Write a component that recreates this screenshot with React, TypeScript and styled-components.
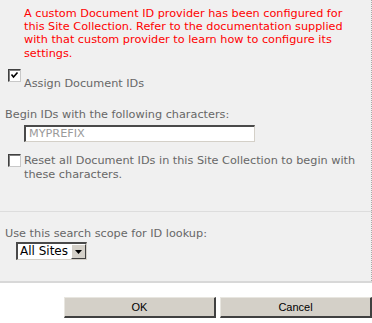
import React from 'react'
import styled, { createGlobalStyle } from 'styled-components'

const GlobalStyle = createGlobalStyle`
  html, body {
    margin: 0;
    padding: 0;
    background: #ffffff;
  }

  body {
    font-family: 'DejaVu Sans', Verdana, sans-serif;
    font-size: 11.25px;
  }
`

const Page = styled.div`
  width: 372px;
  height: 323px;
  display: flex;
  flex-direction: column;
  overflow: hidden;
`

const Panel = styled.div`
  background: #f0f0f0;
  border-right: 1px dotted #a8a8a8;
  box-sizing: border-box;
`

const Section = styled.section<{ $height: number }>`
  height: ${(p) => p.$height}px;
  box-sizing: border-box;
  padding: 7px 0 0 0;
`

const Divider = styled.div<{ $size?: number; $color?: string }>`
  height: ${(p) => p.$size ?? 1}px;
  background: ${(p) => p.$color ?? '#dddddd'};
  margin-right: -1px;
`

const Notice = styled.p`
  margin: 0 0 0 24px;
  padding-right: 12px;
  color: #ff0000;
  line-height: 13.2px;
`

const CheckRow = styled.div<{ $top: number; $labelTop: number }>`
  display: flex;
  align-items: flex-start;
  gap: 3px;
  margin: ${(p) => p.$top}px 0 0 8px;

  & > label {
    padding-top: ${(p) => p.$labelTop}px;
  }
`

const Box = styled.span`
  flex: none;
  width: 13px;
  height: 13px;
  box-sizing: border-box;
  background: #ffffff;
  border-top: 1px solid #404040;
  border-left: 1px solid #404040;
  border-right: 1px solid #c8c8c8;
  border-bottom: 1px solid #c8c8c8;
  box-shadow: inset 1px 1px 0 #808080;
  display: flex;
  align-items: center;
  justify-content: center;
`

const Label = styled.label`
  color: #676767;
  line-height: 13.6px;
`

const FieldLabel = styled.div<{ $top: number }>`
  margin: ${(p) => p.$top}px 0 0 5px;
  color: #676767;
  line-height: 13px;
`

const TextInput = styled.div`
  margin: 4px 0 0 24px;
  width: 231px;
  height: 17px;
  box-sizing: border-box;
  background: #ffffff;
  border-top: 2px solid #4a4a4a;
  border-left: 2px solid #4a4a4a;
  border-right: 1px solid #d4d0c8;
  border-bottom: 1px solid #d4d0c8;
  color: #9a9a9a;
  padding: 1px 0 0 3px;
  line-height: 12px;
`

const Select = styled.div`
  margin: 2px 0 0 16px;
  width: 71px;
  height: 18px;
  box-sizing: border-box;
  display: flex;
  align-items: stretch;
  background: #ffffff;
  border-top: 2px solid #4a4a4a;
  border-left: 2px solid #4a4a4a;
  border-right: 1px solid #d4d0c8;
  border-bottom: 1px solid #d4d0c8;
`

const SelectValue = styled.span`
  flex: 1;
  color: #000000;
  font-size: 12px;
  line-height: 15px;
  padding-left: 2px;
`

const SelectArrow = styled.span`
  flex: none;
  width: 15px;
  box-sizing: border-box;
  background: #d4d0c8;
  border-top: 1px solid #ffffff;
  border-left: 1px solid #ffffff;
  border-right: 1px solid #404040;
  border-bottom: 1px solid #404040;
  display: flex;
  align-items: center;
  justify-content: center;
`

const Footer = styled.footer`
  flex: 1;
  background: #ffffff;
  display: flex;
  justify-content: flex-end;
  align-items: flex-start;
  gap: 4px;
  padding-top: 14px;
`

const Button = styled.button`
  width: 152px;
  height: 21px;
  margin: 0;
  padding: 0;
  box-sizing: border-box;
  background: #d4d0c8;
  border-top: 1px solid #e8e6e0;
  border-left: 1px solid #e8e6e0;
  border-right: 2px solid #404040;
  border-bottom: 2px solid #404040;
  font-family: 'Liberation Sans', Arial, sans-serif;
  font-size: 11px;
  color: #000000;
`

const Check = () => (
  <svg width="9" height="9" viewBox="0 0 9 9">
    <path d="M1.5 3.5 L3.5 6 L7.5 1.5" fill="none" stroke="#000" strokeWidth="1.6" />
  </svg>
)

const Arrow = () => (
  <svg width="7" height="4" viewBox="0 0 7 4">
    <path d="M0 0 H7 L3.5 4 Z" fill="#000" />
  </svg>
)

export default function App() {
  return (
    <>
      <GlobalStyle />
      <Page>
        <Panel>
          <Section $height={211}>
            <Notice>
              A custom Document ID provider has been configured for this Site
              Collection. Refer to the documentation supplied with that custom
              provider to learn how to configure its settings.
            </Notice>

            <CheckRow $top={9} $labelTop={8}>
              <Box>
                <Check />
              </Box>
              <Label>Assign Document IDs</Label>
            </CheckRow>

            <FieldLabel $top={18}>Begin IDs with the following characters:</FieldLabel>
            <TextInput>MYPREFIX</TextInput>

            <CheckRow $top={12} $labelTop={0}>
              <Box />
              <Label>
                Reset all Document IDs in this Site Collection to begin with
                these characters.
              </Label>
            </CheckRow>
          </Section>

          <Divider />

          <Section $height={69}>
            <FieldLabel $top={8}>Use this search scope for ID lookup:</FieldLabel>
            <Select>
              <SelectValue>All Sites</SelectValue>
              <SelectArrow>
                <Arrow />
              </SelectArrow>
            </Select>
          </Section>

          <Divider $size={2} $color="#d8d8d8" />
        </Panel>

        <Footer>
          <Button>OK</Button>
          <Button>Cancel</Button>
        </Footer>
      </Page>
    </>
  )
}
